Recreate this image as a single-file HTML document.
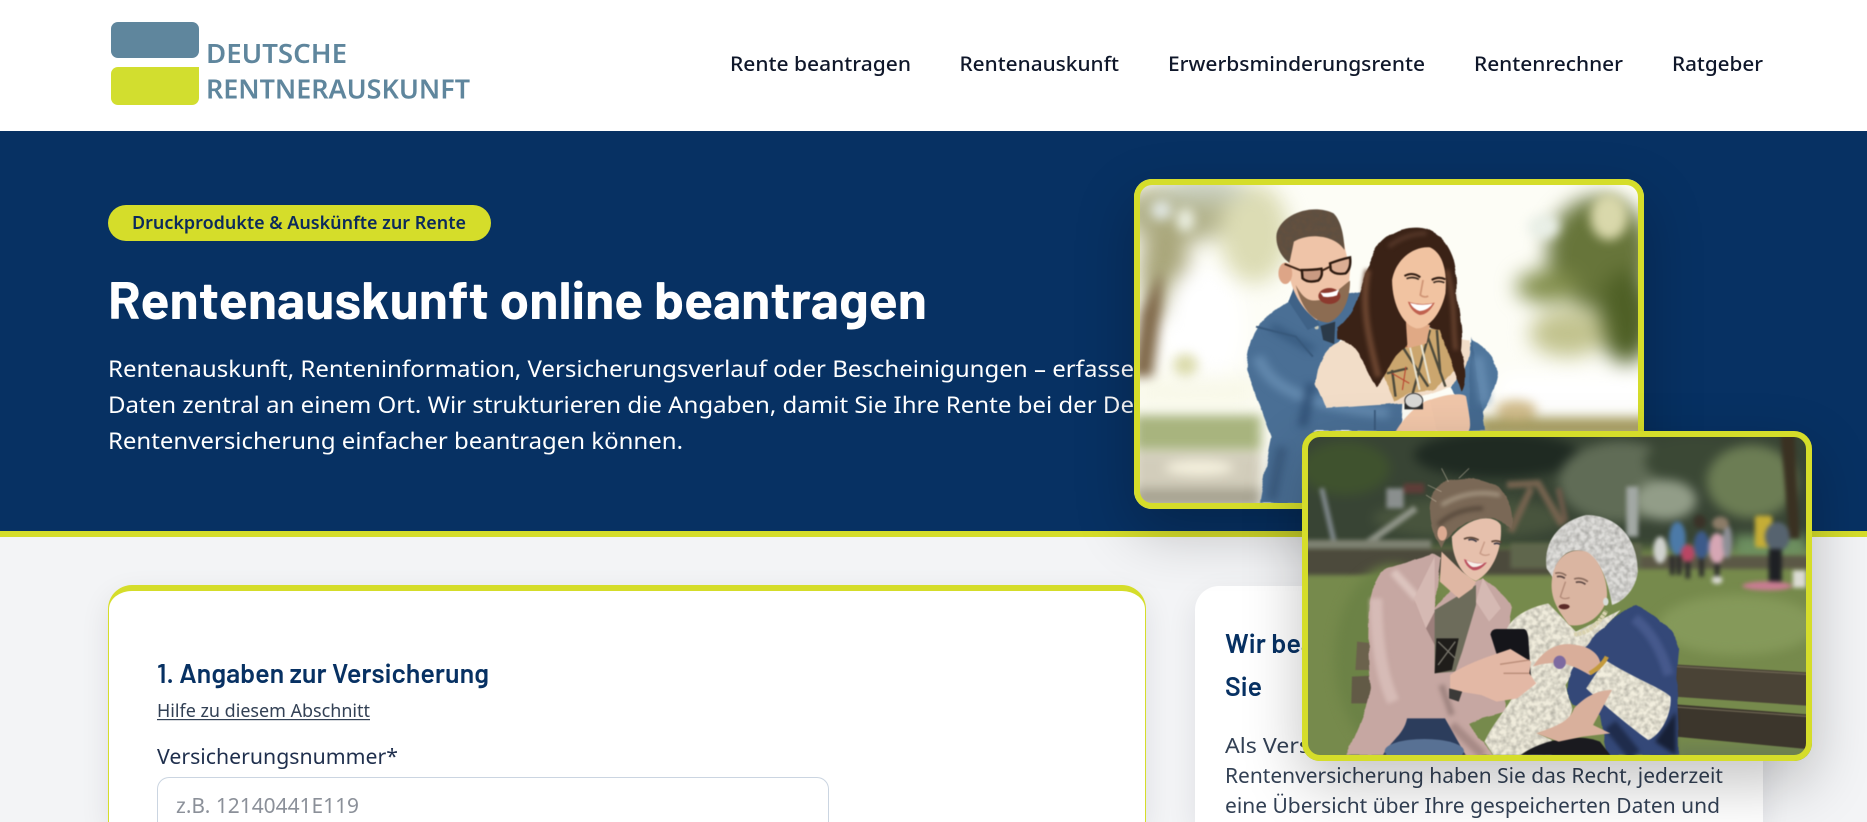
<!DOCTYPE html>
<html lang="de"><head><meta charset="utf-8"><title>Rentenauskunft online beantragen</title>
<style>
html,body{margin:0;padding:0;width:1867px;height:822px;overflow:hidden;background:#f3f4f6}
body{position:relative;font-family:"Noto Sans","Liberation Sans",sans-serif}
.abs{position:absolute}
#hdr{left:0;top:0;width:1867px;height:131px;background:#fff}
#hero{left:0;top:131px;width:1867px;height:400px;background:#073163;border-bottom:6px solid #d5dd2a}
#form{left:108px;top:585px;width:1038px;height:237px;box-sizing:border-box;background:#fff;border:1px solid #d5dd2a;border-top:6px solid #d5dd2a;border-bottom:0;border-radius:24px 24px 0 0;box-shadow:0 10px 30px rgba(15,23,42,.09)}
#side{left:1195px;top:586px;width:568px;height:236px;background:#fff;border-radius:24px 24px 0 0;box-shadow:0 10px 30px rgba(15,23,42,.09)}
#inp{left:157px;top:777px;width:672px;height:45px;box-sizing:border-box;background:#fff;border:1.5px solid #cbd5e1;border-bottom:0;border-radius:12px 12px 0 0}
#badge{left:108px;top:205px;width:383px;height:36px;background:#d5dd2a;border-radius:18px}
.logo1{left:111px;top:22px;width:88px;height:36px;border-radius:7px;background:#5f869d}
.logo2{left:111px;top:67px;width:88px;height:38px;border-radius:7px 0 7px 7px;background:#d2de2f}
#txt{left:0;top:0;width:1867px;height:822px}
text{font-family:"Noto Sans","Liberation Sans",sans-serif;white-space:pre}
text.h{font-family:"Barlow","Liberation Sans",sans-serif}
.ph{box-sizing:border-box;border-radius:18px;box-shadow:0 22px 60px rgba(0,0,0,.24)}
.ph svg{position:absolute;display:block}
.fr{position:absolute;left:0;top:0;right:0;bottom:0;box-sizing:border-box;border:6px solid #d5dd2a;border-radius:18px;pointer-events:none}
.cl{position:absolute;left:0;top:0;width:100%;height:100%;border-radius:18px;overflow:hidden}
</style></head><body>
<div class="abs" id="hdr"></div>
<div class="abs logo1"></div><div class="abs logo2"></div>
<div class="abs" id="hero"></div>
<div class="abs" id="badge"></div>
<div class="abs" id="form"></div>
<div class="abs" id="side"></div>
<div class="abs" id="inp"></div>

<svg class="abs" id="txt" width="1867" height="822" viewBox="0 0 1867 822">
<text x="206" y="63" font-size="26.5" font-weight="600" fill="#5f869d" textLength="141" lengthAdjust="spacingAndGlyphs">DEUTSCHE</text>
<text x="206" y="98.5" font-size="26.5" font-weight="600" fill="#5f869d" textLength="264" lengthAdjust="spacingAndGlyphs">RENTNERAUSKUNFT</text>
<g font-size="19.8" fill="#0f172a" font-weight="500">
<text x="730" y="71" textLength="181" lengthAdjust="spacingAndGlyphs">Rente beantragen</text>
<text x="959.5" y="71" textLength="159.5" lengthAdjust="spacingAndGlyphs">Rentenauskunft</text>
<text x="1168" y="71" textLength="257" lengthAdjust="spacingAndGlyphs">Erwerbsminderungsrente</text>
<text x="1474" y="71" textLength="149" lengthAdjust="spacingAndGlyphs">Rentenrechner</text>
<text x="1672" y="71" textLength="91" lengthAdjust="spacingAndGlyphs">Ratgeber</text>
</g>
<text x="132" y="229" font-size="17.6" font-weight="600" fill="#0b2a5c" textLength="334" lengthAdjust="spacingAndGlyphs">Druckprodukte &amp; Auskünfte zur Rente</text>
<text class="h" x="108" y="319" font-size="53" font-weight="700" fill="#fff" textLength="819" lengthAdjust="spacingAndGlyphs">Rentenauskunft online beantragen</text>
<g font-size="23" fill="#fff">
<text x="108" y="377" textLength="1026" lengthAdjust="spacingAndGlyphs">Rentenauskunft, Renteninformation, Versicherungsverlauf oder Bescheinigungen – erfasse</text>
<text x="108" y="413" textLength="1026" lengthAdjust="spacingAndGlyphs">Daten zentral an einem Ort. Wir strukturieren die Angaben, damit Sie Ihre Rente bei der De</text>
<text x="108" y="449" textLength="575" lengthAdjust="spacingAndGlyphs">Rentenversicherung einfacher beantragen können.</text>
</g>
<text class="h" x="157" y="683" font-size="27" font-weight="600" fill="#073163" textLength="332" lengthAdjust="spacingAndGlyphs">1. Angaben zur Versicherung</text>
<text x="157" y="717" font-size="18.2" fill="#334155" textLength="213" lengthAdjust="spacingAndGlyphs">Hilfe zu diesem Abschnitt</text>
<rect x="157" y="719" width="213" height="1.2" fill="#334155"/>
<text x="157" y="764" font-size="21" fill="#1f2f4d" textLength="241" lengthAdjust="spacingAndGlyphs">Versicherungsnummer*</text>
<text x="176" y="813" font-size="20.8" fill="#8b9099" textLength="183" lengthAdjust="spacingAndGlyphs">z.B. 12140441E119</text>
<text class="h" x="1225" y="653" font-size="27" font-weight="600" fill="#073163" textLength="90" lengthAdjust="spacingAndGlyphs">Wir bea</text>
<text class="h" x="1225" y="696" font-size="27" font-weight="600" fill="#073163" textLength="37" lengthAdjust="spacingAndGlyphs">Sie</text>
<g font-size="20.8" fill="#334155">
<text x="1225" y="753" textLength="85" lengthAdjust="spacingAndGlyphs">Als Vers</text>
<text x="1225" y="783" textLength="498" lengthAdjust="spacingAndGlyphs">Rentenversicherung haben Sie das Recht, jederzeit</text>
<text x="1225" y="813" textLength="495" lengthAdjust="spacingAndGlyphs">eine Übersicht über Ihre gespeicherten Daten und</text>
</g>
</svg>

<!-- photo 1 -->
<div class="abs ph" style="left:1134px;top:179px;width:510px;height:330px">
<div class="cl">
<svg style="left:-14px;top:-9px" width="540" height="350" viewBox="0 0 1568 1050" preserveAspectRatio="none">
<defs>
<filter id="b1" x="-30%" y="-30%" width="160%" height="160%" color-interpolation-filters="sRGB"><feGaussianBlur stdDeviation="30"/></filter>
<filter id="b3" x="-30%" y="-30%" width="160%" height="160%" color-interpolation-filters="sRGB"><feGaussianBlur stdDeviation="16"/></filter>
<filter id="b4" x="-30%" y="-30%" width="160%" height="160%" color-interpolation-filters="sRGB"><feGaussianBlur stdDeviation="6"/></filter>
<filter id="b5" x="-30%" y="-30%" width="160%" height="160%" color-interpolation-filters="sRGB"><feGaussianBlur stdDeviation="12"/></filter>
<filter id="s" x="-5%" y="-5%" width="110%" height="110%" color-interpolation-filters="sRGB"><feTurbulence type="fractalNoise" baseFrequency="0.02" numOctaves="2" seed="4" result="n"/><feDisplacementMap in="SourceGraphic" in2="n" scale="12" xChannelSelector="R" yChannelSelector="G" result="d"/><feGaussianBlur in="d" stdDeviation="1.6"/></filter>
<filter id="sf" x="-5%" y="-5%" width="110%" height="110%" color-interpolation-filters="sRGB"><feGaussianBlur stdDeviation="1.5"/></filter>
<filter id="n" x="0" y="0" width="100%" height="100%" color-interpolation-filters="sRGB"><feTurbulence type="fractalNoise" baseFrequency="0.12" numOctaves="3" seed="7"/><feColorMatrix values="0 0 0 0 .5 0 0 0 0 .5 0 0 0 0 .5 1.6 0 0 0 -.6"/></filter>
<filter id="k" x="-5%" y="-5%" width="110%" height="110%" color-interpolation-filters="sRGB"><feTurbulence type="fractalNoise" baseFrequency="0.07" numOctaves="2" seed="9" result="t"/><feColorMatrix in="t" values="0 0 0 0 .3 0 0 0 0 .3 0 0 0 0 .28 .7 0 0 0 -.24" result="m"/><feComposite in="m" in2="SourceAlpha" operator="in" result="c"/><feMerge result="o"><feMergeNode in="SourceGraphic"/><feMergeNode in="c"/></feMerge><feGaussianBlur in="o" stdDeviation="1.4"/></filter>
</defs>
<rect width="1568" height="1050" fill="#fdfdf6"/>
<g filter="url(#b1)">
<ellipse cx="170" cy="130" rx="170" ry="90" fill="#b3b38c"/>
<ellipse cx="130" cy="300" rx="70" ry="150" fill="#a9a67a"/>
<ellipse cx="390" cy="190" rx="100" ry="150" fill="#dcdcb4"/>
<ellipse cx="240" cy="60" rx="130" ry="40" fill="#c6ccba"/>
<ellipse cx="240" cy="470" rx="120" ry="190" fill="#fff"/>
<ellipse cx="1390" cy="250" rx="150" ry="170" fill="#67753a"/>
<ellipse cx="1470" cy="440" rx="80" ry="140" fill="#4f6026"/>
<ellipse cx="1240" cy="350" rx="90" ry="50" fill="#84904e"/>
<ellipse cx="1300" cy="490" rx="110" ry="70" fill="#c2c38e"/>
<rect x="1100" y="610" width="430" height="120" fill="#fff"/>
<rect x="40" y="620" width="360" height="90" fill="#f8f8e8"/>
</g>
<g filter="url(#b3)">
<path d="M35 620L60 430L120 300L120 420L95 620Z" fill="#80694a"/>
<ellipse cx="1420" cy="140" rx="55" ry="70" fill="#d9d8ab"/>
<ellipse cx="1230" cy="170" rx="46" ry="36" fill="#e9efe7"/>
<ellipse cx="120" cy="120" rx="30" ry="30" fill="#dfe5e0"/>
<ellipse cx="190" cy="150" rx="26" ry="36" fill="#eaeee0"/>
<ellipse cx="190" cy="585" rx="36" ry="34" fill="#dcdcae"/>
<rect x="40" y="735" width="370" height="105" fill="#a8b47e"/>
<rect x="40" y="845" width="370" height="170" fill="#d2cdbb"/>
<ellipse cx="230" cy="893" rx="100" ry="22" fill="#f5f1de"/>
<rect x="40" y="955" width="370" height="60" fill="#a8a492"/>
<rect x="1040" y="742" width="500" height="60" fill="#aca265"/>
<ellipse cx="1150" cy="720" rx="60" ry="30" fill="#d3be8e"/>
</g>
<g filter="url(#s)">
<path d="M1020 510C1080 540 1100 590 1095 620C1080 680 1050 740 1020 760L960 650Z" fill="#4f769c"/>
<path d="M405 1000L440 800L368 600C370 500 400 450 490 395L510 350L705 370L640 510L570 630L600 712L820 695L815 785L570 780L530 830L530 1000Z" fill="#4a6f95"/>
<path d="M1020 500L1060 780L1010 782Z" fill="#456a90"/>
</g>
<g filter="url(#b5)">
<path d="M400 560C430 640 500 700 780 730" stroke="#6288ad" stroke-width="34" fill="none"/>
<path d="M470 830L440 990" stroke="#3a5a7e" stroke-width="30" fill="none"/>
<path d="M555 640L530 770" stroke="#2f4f74" stroke-width="24" fill="none"/>
<path d="M440 470L560 540" stroke="#36597e" stroke-width="22" fill="none"/>
<path d="M1040 560L1060 700" stroke="#6a90b5" stroke-width="24" fill="none"/>
</g>
<g filter="url(#sf)">
<path d="M395 470L510 500L560 560" stroke="#38597c" stroke-width="6" fill="none"/>
<path d="M740 720V780" stroke="#3a5a7c" stroke-width="5"/>
<path d="M582 468L625 455L622 522L590 510Z" fill="#2b3a49"/>
<circle cx="571" cy="472" r="6" fill="#c8c8b8"/>
<path d="M505 352L580 465L545 480L490 395Z" fill="#3f6287"/>
</g>
<g filter="url(#s)">
<path d="M568 640C575 560 610 520 650 510L820 480L1015 510C1022 570 1000 610 960 650L820 700L600 715Z" fill="#f2ddc8"/>
<path d="M810 530L860 480L940 470L985 590L910 660L840 670L795 695L758 600Z" fill="#cba66e"/>
</g>
<g filter="url(#sf)">
<path d="M820 530L895 650M900 480L850 670M775 610L835 595M890 490L945 650M800 680L790 600M920 480L930 610" stroke="#4d4a3c" stroke-width="7" fill="none"/>
<path d="M835 500L870 660M865 480L900 640" stroke="#e8e2cf" stroke-width="6" fill="none"/>
<path d="M790 610L840 640M830 590L820 660M890 510L830 530" stroke="#b8402e" stroke-width="3" fill="none"/>
</g>
<g filter="url(#s)">
<path d="M632 475C700 420 700 330 730 260C760 190 830 165 880 175C950 190 985 270 978 370C990 450 995 500 990 540C1005 590 1008 640 992 665L960 570L930 480L890 470L800 560C775 600 760 640 745 652C710 590 690 515 632 505Z" fill="#3a2216"/>
</g>
<g filter="url(#b4)">
<path d="M720 300C700 400 720 500 750 620" stroke="#6b4530" stroke-width="18" fill="none"/>
<path d="M950 300C975 400 965 470 975 540" stroke="#6a4430" stroke-width="12" fill="none"/>
<path d="M780 230Q830 190 890 190" stroke="#58392a" stroke-width="12" fill="none"/>
</g>
<g filter="url(#sf)">
<path d="M830 450L900 465L890 520L835 535Z" fill="#e0a985"/>
<path d="M790 330C800 270 850 228 900 232C940 250 950 310 945 370C930 440 890 478 860 475C820 465 790 400 790 330Z" fill="#f1c3a1"/>
<path d="M826 318Q850 304 872 322M905 330Q925 318 945 328" stroke="#2f1c12" stroke-width="6" fill="none"/>
<path d="M832 326Q850 318 868 328M910 338Q925 330 942 338" stroke="#3a2a20" stroke-width="5" fill="none"/>
<path d="M880 330L872 375Q884 385 895 378" stroke="#cf9475" stroke-width="5" fill="none"/>
<path d="M836 395Q875 408 914 398Q895 435 870 435Q846 426 836 395Z" fill="#c0614f"/>
<path d="M842 399Q875 408 908 401Q893 422 870 423Q852 418 842 399Z" fill="#fff"/>
<path d="M490 225C520 185 620 180 650 220L668 300L662 380C640 430 600 450 570 450C520 410 500 360 490 310Z" fill="#efc4a8"/>
<ellipse cx="480" cy="310" rx="20" ry="32" fill="#dda587"/>
<path d="M510 345C535 390 550 395 580 390C620 380 640 352 668 332C668 400 640 445 605 458C560 455 530 420 510 345Z" fill="#8c6c52"/>
</g>
<g filter="url(#k)"><path d="M455 190C470 130 560 100 620 130C640 150 650 190 652 240C620 190 540 190 505 215L492 278C465 260 450 220 455 190Z" fill="#63503f"/></g>
<g filter="url(#sf)">
<ellipse cx="608" cy="378" rx="32" ry="24" fill="#8c3a2e"/>
<path d="M582 368Q610 372 636 358L630 376Q610 384 590 380Z" fill="#fff"/>
<path d="M478 282L527 302" stroke="#3c2416" stroke-width="6"/>
<path d="M528 300Q560 300 585 296Q590 320 575 332Q545 340 530 325Z" fill="#c99a82" stroke="#2c1a10" stroke-width="7"/>
<path d="M610 280Q640 268 668 262Q672 295 655 310Q625 316 612 300Z" fill="#dcae94" stroke="#2c1a10" stroke-width="7"/>
<path d="M587 302L610 290" stroke="#3c2416" stroke-width="6"/>
<path d="M800 785C830 730 890 680 910 690C925 720 925 760 918 785Z" fill="#f3c8aa"/>
<path d="M900 690C950 670 1000 668 1005 680C1015 740 1025 785 1005 785L920 785Z" fill="#f0c6a9"/>
<rect x="826" y="700" width="54" height="18" fill="#2b2b2b"/>
<ellipse cx="853" cy="692" rx="26" ry="22" fill="#d8d8d6" stroke="#333" stroke-width="3"/>
</g>
</svg>
</div>
<div class="fr"></div>
</div>

<!-- photo 2 -->
<div class="abs ph" style="left:1302px;top:431px;width:510px;height:330px">
<div class="cl">
<svg style="left:-12px;top:-6px" width="540" height="350" viewBox="0 0 1568 1050" preserveAspectRatio="none">
<rect width="1568" height="1050" fill="#768a4c"/>
<g filter="url(#b3)">
<rect x="-30" y="-30" width="1630" height="400" fill="#384434"/>
<ellipse cx="160" cy="130" rx="130" ry="80" fill="#3f522e"/>
<ellipse cx="600" cy="90" rx="240" ry="70" fill="#1f2a22"/>
<ellipse cx="960" cy="170" rx="180" ry="120" fill="#606c56"/>
<ellipse cx="1170" cy="110" rx="140" ry="70" fill="#3b4835"/>
<ellipse cx="1340" cy="170" rx="130" ry="110" fill="#6c7d54"/>
<ellipse cx="1090" cy="225" rx="90" ry="60" fill="#929d88"/>
<ellipse cx="520" cy="280" rx="280" ry="60" fill="#48543d"/>
<rect x="1290" y="330" width="210" height="70" fill="#6d8f60"/>
</g>
<g filter="url(#b4)">
<path d="M1425 30L1465 30L1480 340L1450 340Z" fill="#3a3122"/>
<path d="M92 190L130 360" stroke="#8a9298" stroke-width="13"/>
<path d="M210 365L365 250" stroke="#8f9488" stroke-width="20"/>
<rect x="40" y="345" width="370" height="26" fill="#7e8172"/>
<path d="M630 180L720 175L790 300M700 190L640 320" stroke="#75634f" stroke-width="20" fill="none"/>
<path d="M780 190L800 290" stroke="#6d5a4a" stroke-width="16" fill="none"/>
<rect x="977" y="185" width="34" height="150" fill="#a2a8a4"/>
<rect x="280" y="190" width="50" height="60" fill="#8a8f8e"/>
<rect x="330" y="175" width="60" height="30" fill="#5e3d38"/>
<rect x="30" y="372" width="740" height="78" fill="#4c4a3c"/>
<rect x="1000" y="392" width="510" height="40" fill="#5b5846"/>
<rect x="640" y="355" width="380" height="75" fill="#5f664c"/>
<rect x="1350" y="272" width="50" height="96" rx="8" fill="#c5ad36"/>
<ellipse cx="1075" cy="375" rx="20" ry="40" fill="#d0d2ce"/>
<ellipse cx="1125" cy="340" rx="24" ry="50" fill="#4c7aa8"/>
<ellipse cx="1155" cy="385" rx="20" ry="26" fill="#b94664"/>
<ellipse cx="1195" cy="360" rx="22" ry="42" fill="#3c5a8a"/>
<ellipse cx="1240" cy="370" rx="24" ry="46" fill="#d6a6b4"/>
<ellipse cx="1270" cy="350" rx="14" ry="50" fill="#8d8f96"/>
<ellipse cx="1190" cy="290" rx="18" ry="20" fill="#3a3228"/>
<ellipse cx="1250" cy="295" rx="24" ry="20" fill="#8c7c68"/>
<path d="M1110 390V450M1130 390V450M1155 410V460M1195 400V455M1240 415V470" stroke="#2a2a2a" stroke-width="14"/>
<ellipse cx="1240" cy="465" rx="16" ry="12" fill="#d9d9d2"/>
<ellipse cx="1415" cy="335" rx="36" ry="44" fill="#56636f"/>
<rect x="1390" y="372" width="38" height="98" fill="#1e2024"/>
<ellipse cx="1385" cy="483" rx="72" ry="14" fill="#c97c92"/>
<rect x="1460" y="436" width="38" height="52" fill="#dcdcd4"/>
</g>
<g filter="url(#b3)">
<ellipse cx="300" cy="700" rx="170" ry="280" fill="#6c8246"/>
<ellipse cx="1300" cy="600" rx="230" ry="90" fill="#85995a"/>
<rect x="1120" y="960" width="400" height="60" fill="#6d8050"/>
</g>
<g filter="url(#sf)">
<path d="M1115 718L1500 742V842L1115 815Z" fill="#4a4336"/>
<path d="M1120 838L1500 868V972L1120 935Z" fill="#3c362c"/>
<path d="M1115 724L1500 748M1120 846L1500 874" stroke="#6b6350" stroke-width="4"/>
<path d="M195 650L240 655V735H190Z" fill="#6b624c"/>
<path d="M180 755L240 752V835H178Z" fill="#625a46"/>
</g>
<g filter="url(#s)">
<path d="M165 990C190 930 225 860 235 790C225 690 225 590 235 520C250 450 270 430 300 425L415 385L440 400L420 550L480 480L540 470L560 460C600 490 640 520 645 550L630 640C600 750 620 800 630 860L560 880L520 900L590 990Z" fill="#c6a7a2"/>
</g>
<g filter="url(#b4)">
<path d="M250 520C250 620 260 740 300 830" stroke="#d6bbb6" stroke-width="36" fill="none"/>
<path d="M470 900L560 990" stroke="#a78a86" stroke-width="26" fill="none"/>
<path d="M440 780L470 870" stroke="#9f8480" stroke-width="18" fill="none"/>
<path d="M300 440L370 520" stroke="#dcc4be" stroke-width="24" fill="none"/>
</g>
<g filter="url(#sf)">
<path d="M360 520L420 395L420 560L395 610Z" fill="#d5b9b3"/>
<path d="M395 610L420 560L440 700" fill="#9c7f7b"/>
<path d="M560 460L612 550L578 590L540 530Z" fill="#d5b9b3"/>
<path d="M420 555L540 480L540 540L500 680L480 740L420 745Z" fill="#6d6c5b"/>
<path d="M425 640L490 640L470 735L420 745Z" fill="#1f1d1a"/>
<path d="M430 650L480 700M480 650L430 720" stroke="#77746a" stroke-width="4"/>
<path d="M440 380L500 440L540 470L530 490L490 520L435 470Z" fill="#dfb7a3"/>
</g>
<g filter="url(#s)">
<path d="M415 200C450 145 560 150 610 190C640 230 650 270 645 312C620 280 560 268 520 290C480 310 450 340 440 368C415 330 395 270 415 200Z" fill="#7a6856"/>
</g>
<g filter="url(#b4)">
<path d="M440 240Q520 190 610 210" stroke="#a59682" stroke-width="12" fill="none"/>
<path d="M430 300Q480 250 560 250" stroke="#55473a" stroke-width="12" fill="none"/>
</g>
<g filter="url(#sf)" stroke="#cfc4ae" stroke-width="2" fill="none" opacity=".7">
<path d="M440 200L400 180M460 170L440 130M490 160L520 130M425 230L395 210"/>
</g>
<g filter="url(#sf)">
<path d="M470 335C520 275 590 265 612 300C618 370 590 440 540 468C500 455 470 400 470 335Z" fill="#e6c0ac"/>
<path d="M505 342Q525 332 548 345M585 350Q600 344 614 352" stroke="#5a4436" stroke-width="5" fill="none"/>
<path d="M518 345Q530 340 542 350M592 357Q602 352 610 358" stroke="#3c3a44" stroke-width="5" fill="none"/>
<path d="M565 350L552 385Q565 395 580 388" stroke="#c79a86" stroke-width="4" fill="none"/>
<path d="M505 402Q540 420 572 412Q550 440 530 435Q510 425 505 402Z" fill="#bb4f5e"/>
<path d="M512 406Q540 418 564 414Q548 428 530 426Q518 420 512 406Z" fill="#f6f0ea"/>
<ellipse cx="442" cy="325" rx="14" ry="22" fill="#dcaa92"/>
<path d="M270 990C290 950 330 930 340 880L450 880L510 990Z" fill="#2c3d5c"/>
<ellipse cx="390" cy="978" rx="115" ry="36" fill="#587194"/>
</g>
<g filter="url(#k)">
<path d="M565 950C600 870 660 830 670 740L630 610C650 570 700 545 750 535L830 620L960 555L880 650L800 780L820 850L810 900L720 925L760 945L760 990L590 990Z" fill="#f0ecdc"/>
</g>
<g filter="url(#s)">
<path d="M805 800C800 740 850 680 880 640C900 620 960 550 1005 540C1060 570 1110 600 1130 670C1125 720 1120 780 1125 820L1130 990L920 990L900 870L820 840Z" fill="#344878"/>
</g>
<g filter="url(#b4)">
<path d="M1000 580C1050 620 1080 680 1100 750" stroke="#46598c" stroke-width="30" fill="none"/>
<path d="M1060 950L1120 860L1120 990Z" fill="#172036"/>
<path d="M930 900L1000 990" stroke="#1f2c4c" stroke-width="40" fill="none"/>
</g>
<g filter="url(#k)">
<path d="M860 790L915 705C1000 760 1080 790 1105 815C1110 860 1080 930 1040 945C980 900 900 830 860 790Z" fill="#f2eede"/>
</g>
<g filter="url(#sf)"><path d="M670 990C720 950 830 920 900 950L930 990Z" fill="#1a1a1f"/></g>
<g filter="url(#k)">
<path d="M745 430C735 350 780 290 860 270C950 270 1010 340 1010 440C1005 490 970 530 935 540C925 480 910 420 860 385C820 365 780 380 765 460Z" fill="#dedddA"/>
</g>
<g filter="url(#sf)">
<path d="M760 470C765 400 810 365 860 380C900 400 925 470 920 520C910 570 860 610 810 600C790 570 755 530 760 470Z" fill="#dab5a1"/>
<path d="M770 445Q788 440 802 452M825 462Q845 455 865 470" stroke="#8a6c5e" stroke-width="5" fill="none"/>
<path d="M775 455Q788 452 798 460M830 472Q845 468 858 478" stroke="#5a4642" stroke-width="5" fill="none"/>
<path d="M800 470L785 515Q795 525 812 518" stroke="#b28a78" stroke-width="4" fill="none"/>
<ellipse cx="796" cy="545" rx="16" ry="8" fill="#5b2b28"/>
<ellipse cx="917" cy="530" rx="8" ry="12" fill="#d8dcd8"/>
<path d="M825 628Q880 625 918 558" stroke="#d9d2b0" stroke-width="13" stroke-dasharray="10 2" fill="none"/>
<path d="M582 628Q585 612 600 612L680 612Q690 615 692 640L700 760L690 775L610 720Z" fill="#15151a"/>
<path d="M465 750C510 715 590 690 640 672L700 710L695 745L715 775L660 820L600 830L555 810L495 800L465 790Z" fill="#e3b8a5"/>
<path d="M610 718L695 705M620 745L695 745" stroke="#b98c78" stroke-width="4" fill="none"/>
<path d="M462 790L500 800L490 830L462 820Z" fill="#3b3a38"/>
<path d="M705 725C740 670 780 650 830 660C880 665 910 700 900 735L870 750C820 720 780 700 705 725Z" fill="#d9ae9a"/>
<ellipse cx="783" cy="712" rx="18" ry="20" fill="#7d6aa0"/>
<path d="M870 745Q905 725 920 695" stroke="#c49a3c" stroke-width="13" fill="none"/>
<path d="M715 925C780 900 810 890 825 850C860 810 900 795 935 795L880 900L930 925L850 935L780 950Z" fill="#d9b09c"/>
</g>
<rect width="1568" height="1050" filter="url(#n)" opacity=".14" style="mix-blend-mode:overlay"/>
</svg>
</div>
<div class="fr"></div>
</div>
</body></html>
